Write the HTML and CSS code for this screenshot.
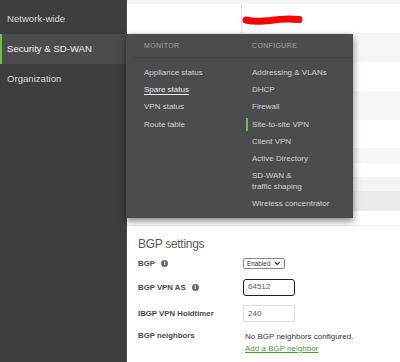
FILE: index.html
```html
<!DOCTYPE html>
<html>
<head>
<meta charset="utf-8">
<link rel="stylesheet" href="styles.css">
</head>
<body>
<div class="app">
  <nav class="sidebar">
    <div class="nav-item">Network-wide</div>
    <div class="nav-item active">Security &amp; SD-WAN</div>
    <div class="nav-item">Organization</div>
  </nav>
  <main class="main">
    <div class="stripes">
      <div class="stripe s-top"></div>
      <div class="stripe s-head">
        <div class="cell-left"></div>
        <div class="cell-right">
          <svg class="scribble" width="62" height="12" viewBox="0 0 62 12"><path d="M4 6 C12 8 20 7.5 28 6.5 C38 5 48 4.5 57 5.5" stroke="#ff0000" stroke-width="7" fill="none" stroke-linecap="round"/></svg>
        </div>
      </div>
      <div class="stripe s-alt h29"></div>
      <div class="stripe h29"></div>
      <div class="stripe s-alt h29"></div>
      <div class="stripe h28"></div>
      <div class="stripe s-alt h15"></div>
      <div class="stripe h14"></div>
      <div class="stripe s-alt2 h14"></div>
      <div class="stripe s-alt3 h20"></div>
      <div class="stripe h15 s-last"></div>
    </div>
    <section class="bgp">
      <h2 class="bgp-title">BGP settings</h2>
      <div class="form">
        <div class="label r1">BGP <span class="info">i</span></div>
        <div class="value r1">
          <div class="select">Enabled <svg width="7" height="5" viewBox="0 0 7 5"><path d="M1 1 L3.5 3.5 L6 1" stroke="#222" stroke-width="1.3" fill="none"/></svg></div>
        </div>
        <div class="label r2">BGP VPN AS <span class="info">i</span></div>
        <div class="value r2"><div class="input focused">64512</div></div>
        <div class="label r3">IBGP VPN Holdtimer</div>
        <div class="value r3"><div class="input">240</div></div>
        <div class="label r4">BGP neighbors</div>
        <div class="value r4 text">
          <div>No BGP neighbors configured.</div>
          <a class="link" href="#">Add a BGP neighbor</a>
        </div>
      </div>
    </section>
  </main>
  <div class="menu">
    <div class="menu-head">
      <div class="col-title left">MONITOR</div>
      <div class="col-title right">CONFIGURE</div>
    </div>
    <div class="menu-divider"></div>
    <div class="menu-body">
      <ul class="col left">
        <li>Appliance status</li>
        <li class="current">Spare status</li>
        <li>VPN status</li>
        <li>Route table</li>
      </ul>
      <ul class="col right">
        <li>Addressing &amp; VLANs</li>
        <li>DHCP</li>
        <li>Firewall</li>
        <li class="selected">Site-to-site VPN</li>
        <li>Client VPN</li>
        <li>Active Directory</li>
        <li>SD-WAN &amp;<br>traffic shaping</li>
        <li>Wireless concentrator</li>
      </ul>
    </div>
  </div>
</div>
</body>
</html>
```

FILE: styles.css
```css
* { box-sizing: border-box; }
html, body { margin: 0; padding: 0; }
body {
  font-family: "Liberation Sans", Arial, sans-serif;
  background: #fff;
  width: 400px;
  height: 362px;
  overflow: hidden;
}
.app {
  position: relative;
  display: flex;
  height: 362px;
}
.sidebar {
  width: 127px;
  flex: none;
  background: #3d3e40;
  border-right: 1px solid #4a4b4d;
  padding-top: 4px;
}
.nav-item {
  height: 30px;
  line-height: 30px;
  font-size: 9.6px;
  color: #dcdcdc;
  border-left: 2px solid transparent;
  padding-left: 5px;
}
.nav-item.active {
  background: #4b4c4e;
  border-left-color: #6cbf48;
  color: #f0f0f0;
}
.main {
  flex: 1;
  display: flex;
  flex-direction: column;
}
.stripe { background: #fff; }
.s-top { height: 4px; background: #f4f4f4; }
.s-head { height: 29px; display: flex; }
.cell-left { width: 115px; border-right: 1px solid #e4e4e4; }
.cell-right { padding: 10px 0 0 0; }
.scribble { display: block; margin-left: 0; }
.s-alt { background: #f6f6f6; }
.s-alt2 { background: #f4f4f4; }
.s-alt3 { background: #ececec; }
.s-last { border-bottom: 1px solid #ececec; }
.h29 { height: 29px; }
.h28 { height: 28px; }
.h20 { height: 20px; }
.h15 { height: 15px; }
.h14 { height: 14px; }

.bgp { padding: 10px 0 0 11px; }
.bgp-title {
  margin: 0;
  font-size: 12px;
  line-height: 16px;
  font-weight: normal;
  color: #5a5a5a;
  letter-spacing: -0.3px;
}
.form {
  display: grid;
  grid-template-columns: 105px 1fr;
  grid-template-rows: 22px 26px 26px auto;
  font-size: 8px;
  color: #333;
}
.label {
  display: flex;
  align-items: center;
  font-weight: bold;
  color: #4a4a4a;
  font-size: 7.8px;
}
.value { display: flex; align-items: center; }
.label.r4, .value.r4 { align-items: flex-start; padding-top: 5px; }
.value.text { flex-direction: column; align-items: flex-start; padding-left: 2px; line-height: 12px; color: #333; }
.info {
  display: inline-block;
  width: 7px;
  height: 7px;
  border-radius: 50%;
  background: #6a6a6a;
  color: #fff;
  font-size: 5.5px;
  line-height: 7px;
  text-align: center;
  font-weight: bold;
  margin-left: 6px;
}
.select {
  display: flex;
  align-items: center;
  gap: 4px;
  height: 11px;
  width: 42px;
  padding: 0 3px;
  border: 1px solid #8a8a8a;
  border-radius: 2px;
  font-size: 6.4px;
  color: #333;
  background: #fff;
}
.input {
  width: 52px;
  height: 17px;
  border: 1px solid #dcdcdc;
  padding-left: 4px;
  line-height: 15px;
  font-size: 8px;
  color: #555;
}
.input.focused {
  border: 1.5px solid #1e1e1e;
  border-radius: 3px;
  line-height: 14px;
}
.link {
  color: #4f9b36;
  text-decoration: underline;
}

.menu {
  position: absolute;
  left: 126px;
  top: 34px;
  width: 227px;
  height: 184px;
  background: #4b4c4e;
  box-shadow: 0 3px 7px rgba(0,0,0,0.5);
  font-size: 8px;
  color: #d4d4d4;
}
.menu-head {
  display: flex;
  padding-top: 7px;
  height: 23px;
}
.col-title {
  font-size: 7px;
  line-height: 10px;
  letter-spacing: 0.35px;
  color: #a5a5a5;
}
.col-title.left { width: 126px; padding-left: 18px; }
.col-title.right { padding-left: 0; }
.menu-divider {
  height: 1px;
  margin-left: 6px;
  background: #434446;
}
.menu-body { display: flex; padding-top: 9px; }
.col { list-style: none; margin: 0; padding: 0; display: flex; flex-direction: column; gap: 6.2px; }
.col li { line-height: 11px; }
.col.left { width: 120px; padding-left: 18px; }
.col.right li { border-left: 2px solid transparent; padding-left: 4px; }
.col.right li.selected { border-left-color: #6cc04a; line-height: 13px; margin: -1px 0; }
.col.left li.current { color: #ececec; text-decoration: underline; text-underline-offset: 2px; }
```
